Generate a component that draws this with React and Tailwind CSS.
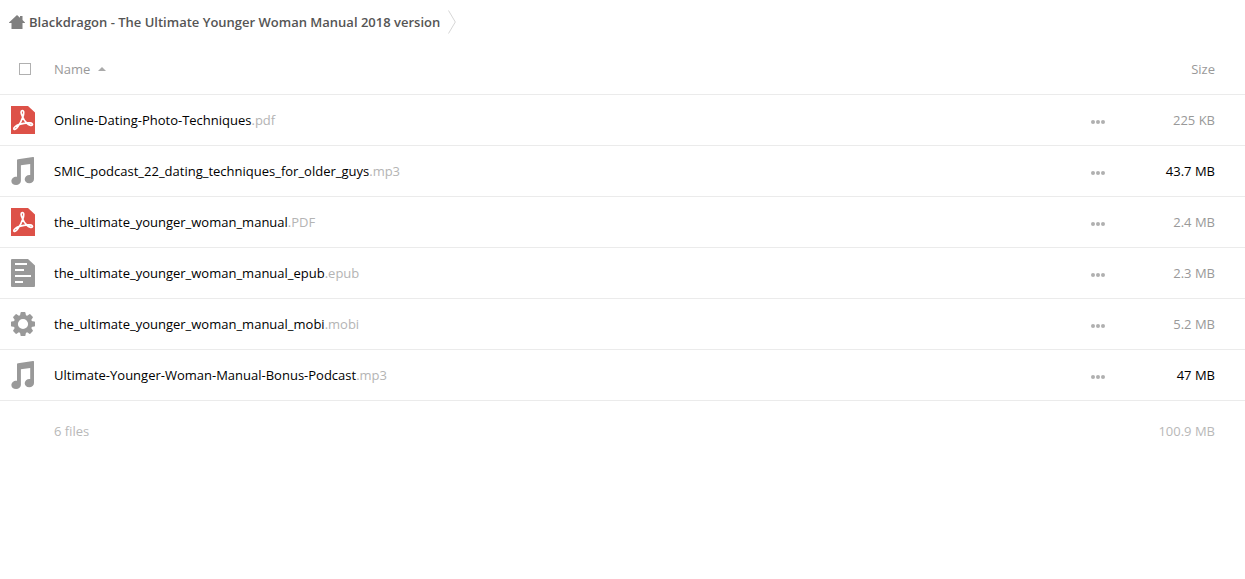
const files = [
    { name: "Online-Dating-Photo-Techniques", ext: ".pdf", size: "225 KB", type: "pdf" },
    { name: "SMIC_podcast_22_dating_techniques_for_older_guys", ext: ".mp3", size: "43.7 MB", type: "audio" },
    { name: "the_ultimate_younger_woman_manual", ext: ".PDF", size: "2.4 MB", type: "pdf" },
    { name: "the_ultimate_younger_woman_manual_epub", ext: ".epub", size: "2.3 MB", type: "text" },
    { name: "the_ultimate_younger_woman_manual_mobi", ext: ".mobi", size: "5.2 MB", type: "app" },
    { name: "Ultimate-Younger-Woman-Manual-Bonus-Podcast", ext: ".mp3", size: "47 MB", type: "audio" },
];

const gearAngles = [0, 45, 90, 135, 180, 225, 270, 315];

function PdfIcon() {
    return (
        <svg className="block" width="24" height="28" viewBox="0 0 24 28" aria-hidden="true">
            <path d="M0 0h17l7 6.5V28H0z" fill="#dd5148" />
            <path
                d="M11.3 10.2C9.8 7.2 9.6 4.6 11.3 4.5c2 0 1.6 3.2.6 6.2-1.2 3.7-3.5 8.2-5.6 10.8-1.5 1.8-3.1 2.3-3.5 1.4-.5-1.3 2.2-3.3 5.7-4.5 3.5-1.2 7.9-1.8 10.5-1.5 1.9.2 2.9 1.2 2.3 2-.8 1-3.3.2-5.6-1.9-2-1.9-3.5-4.4-4.4-6.8z"
                fill="none"
                stroke="#fff"
                strokeWidth="1.7"
                strokeLinejoin="round"
            />
        </svg>
    );
}

function AudioIcon() {
    return (
        <svg className="block" width="24" height="28" viewBox="0 0 24 28" fill="#999" aria-hidden="true">
            <path d="M6 3.3Q6 2.4 7 2.2L22 0q1-.1 1 .8V22c0 2.4-2 4.2-4.8 4.2-2.7 0-4.5-1.5-4.5-3.9 0-2.5 2.1-4.4 4.8-4.4h.7V6.9L9.9 8.3V24c0 2.3-2.1 4-4.8 4C2.3 28 .4 26.5.4 24.2c0-2.500 2.100-4.400 4.900-4.400H6z" />
        </svg>
    );
}

function TextIcon() {
    return (
        <svg className="block" width="24" height="28" viewBox="0 0 24 28" aria-hidden="true">
            <path d="M1 0h16l7 6.5V27q0 1-1 1H1q-1 0-1-1V1q0-1 1-1z" fill="#999" />
            <path d="M4 5h12M4 11h9M4 17h16M4 23h8" stroke="#fff" strokeWidth="2" />
        </svg>
    );
}

function AppIcon() {
    return (
        <svg className="block" width="24" height="24" viewBox="0 0 24 24" aria-hidden="true">
            <circle cx="12" cy="12" r="7.2" fill="none" stroke="#999" strokeWidth="4.2" />
            {gearAngles.map((angle) => (
                <path
                    key={angle}
                    d="M8.9 4 9.600.6q.1-.6.7-.6h3.400q.6 0 .7.6l.7 3.400z"
                    fill="#999"
                    transform={`rotate(${angle} 12 12)`}
                />
            ))}
        </svg>
    );
}

const icons = { pdf: PdfIcon, audio: AudioIcon, text: TextIcon, app: AppIcon };

function Breadcrumb() {
    return (
        <nav className="flex items-center h-11 pl-[9px]">
            <a href="#" className="flex items-center gap-1 font-semibold text-[#555]">
                <svg className="shrink-0" width="16" height="14" viewBox="0 0 16 14" fill="#808080" aria-hidden="true">
                    <path d="M8 0l3 2.8V1h2.5v4.1L16 7.500V8h-2.500v6h-11V8H0v-.5z" />
                </svg>
                Blackdragon - The Ultimate Younger Woman Manual 2018 version
            </a>
            <svg className="ml-2 shrink-0" width="8" height="24" viewBox="0 0 8 24" aria-hidden="true">
                <path d="M.5.5 7.3 12 .5 23.5" fill="none" stroke="#d6d6d6" />
            </svg>
        </nav>
    );
}

function FileRow({ file }) {
    const Icon = icons[file.type];

    return (
        <tr className="h-[51px] border-b border-[#ebebeb]">
            <td className="pl-[11px]">
                <Icon />
            </td>
            <td>
                <a href="#" className="text-black">
                    {file.name}
                    <span className="text-[#b4b4b4]">{file.ext}</span>
                </a>
            </td>
            <td>
                <button type="button" aria-label="More actions" className="flex items-center justify-center w-6 h-6 mt-1">
                    <svg width="14" height="4" viewBox="0 0 14 4" fill="#b0b0b0" aria-hidden="true">
                        <circle cx="2" cy="2" r="2" />
                        <circle cx="7" cy="2" r="2" />
                        <circle cx="12" cy="2" r="2" />
                    </svg>
                </button>
            </td>
            <td className={`pr-[30px] text-right ${file.type === "audio" ? "text-black" : "text-[#999]"}`}>
                {file.size}
            </td>
        </tr>
    );
}

export default function App() {
    return (
        <main className="min-h-screen bg-white font-['Open_Sans',sans-serif] text-[13px] leading-5">
            <Breadcrumb />
            <table className="w-full table-fixed border-collapse">
                <colgroup>
                    <col className="w-[54px]" />
                    <col />
                    <col className="w-[59px]" />
                    <col className="w-[100px]" />
                </colgroup>
                <thead>
                    <tr className="h-[50px] border-b border-[#ebebeb] text-[#999]">
                        <th className="pl-[19px]">
                            <input
                                type="checkbox"
                                aria-label="Select all files"
                                className="block appearance-none size-3 border border-[#b0b0b0] bg-white"
                            />
                        </th>
                        <th className="text-left font-normal">
                            <button type="button" className="flex items-center gap-2">
                                Name
                                <svg width="8" height="4" viewBox="0 0 8 4" fill="#aaa" aria-hidden="true">
                                    <path d="M4 0l4 4H0z" />
                                </svg>
                            </button>
                        </th>
                        <th></th>
                        <th className="pr-[30px] text-right font-normal">Size</th>
                    </tr>
                </thead>
                <tbody>
                    {files.map((file) => (
                        <FileRow key={file.name} file={file} />
                    ))}
                </tbody>
                <tfoot>
                    <tr className="h-[62px] text-[#b8b8b8]">
                        <td></td>
                        <td>6 files</td>
                        <td></td>
                        <td className="pr-[30px] text-right">100.9 MB</td>
                    </tr>
                </tfoot>
            </table>
        </main>
    );
}
